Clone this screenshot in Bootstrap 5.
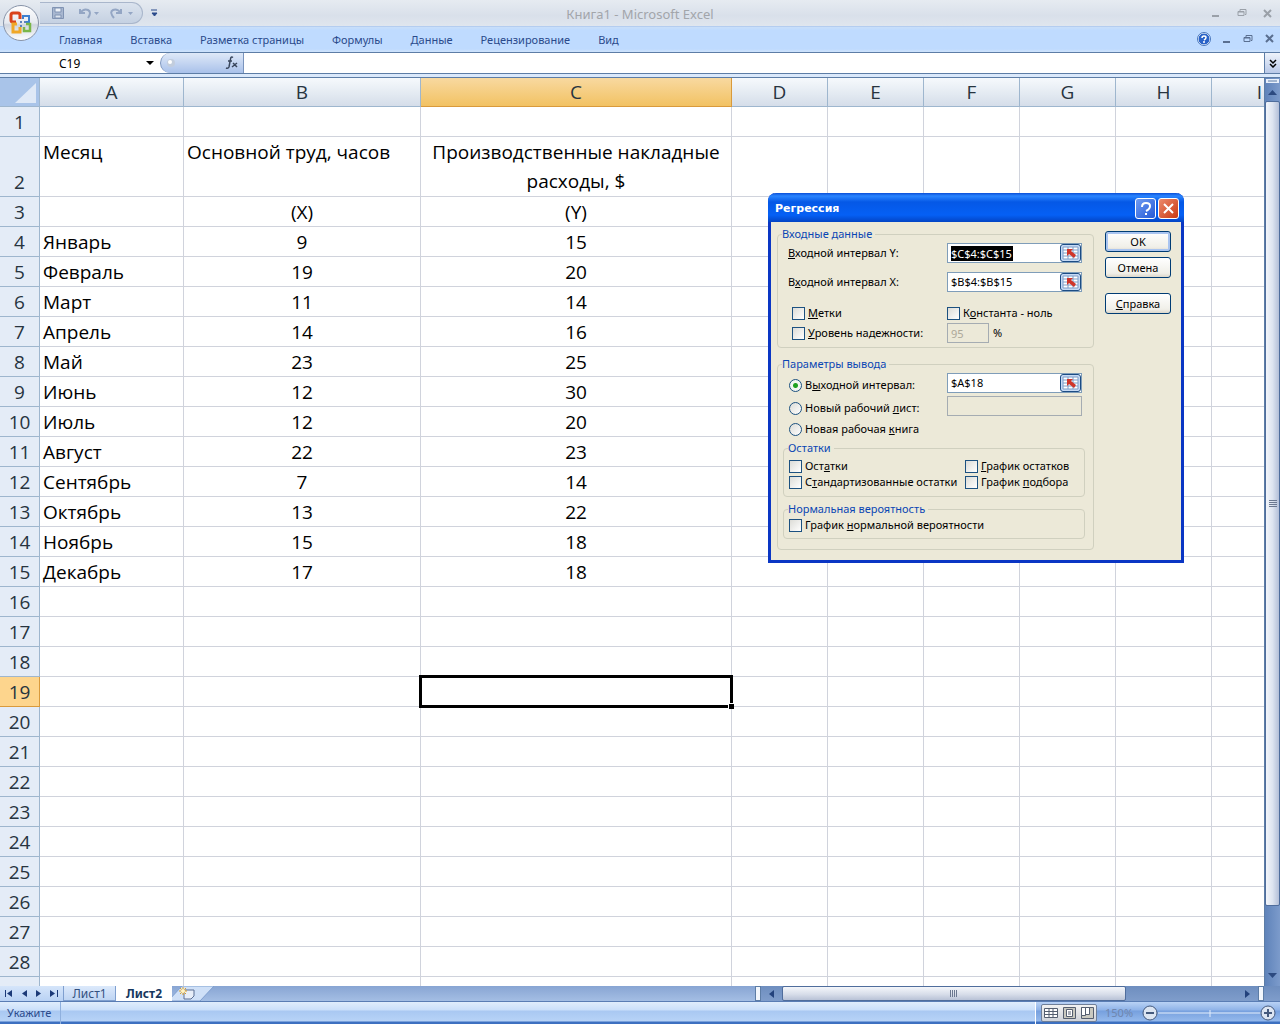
<!DOCTYPE html>
<html lang="ru">
<head>
<meta charset="utf-8">
<meta name="viewport" content="width=device-width, initial-scale=1">
<title>Книга1 - Microsoft Excel</title>
<link rel="stylesheet" href="https://cdn.jsdelivr.net/npm/bootstrap@5.3.0/dist/css/bootstrap.min.css">
<style>
body{font-family:"Noto Sans","Open Sans",sans-serif;font-size:11px;line-height:16px;color:#000;height:100vh;background:#fff}
button{border:0;background:none;padding:0;color:inherit;line-height:inherit}
svg{display:block;flex:none}
u{text-underline-offset:1px}
/* title bar and ribbon */
.titlebar{height:26px;background:linear-gradient(#e6ebf1,#d9e0ea 60%,#e0e6ee)}
.caption{font-size:13px;color:#a2a5aa;padding-top:2px}
.orb{left:3px;top:4px;z-index:3}
.quickbar{height:22px;margin-left:40px;width:103px;padding:0 8px 0 10px;border:1px solid #a9b6cb;border-left:0;border-radius:0 11px 11px 0;background:linear-gradient(#dbe3ee,#c5d1e2)}
.winbtns{color:#9aa0a8}
.ribbon{height:26px;background:linear-gradient(#c9dff9 0,#bfdbff 3px,#bfdbff 22px,#cfe3fb);border-top:1px solid #b4cdf0}
.ribbon a{color:#2a4a8b;text-decoration:none;font-size:11px}
.ribbon nav{padding-left:59px;gap:28px}
.docbtns{gap:12px;padding-right:6px;padding-bottom:2px;color:#5a6f90}
/* formula bar */
.fbar{height:22px;border-top:1px solid #5d7da6;border-bottom:1px solid #5d7da6;background:#fff}
.namebox{width:160px;font-size:12px;padding:1px 6px 0 59px}
.fxpill{width:84px;background:linear-gradient(#dfe9f8,#a9c1ea);border:1px solid #7a94bd;border-width:0 1px 0 1px;border-radius:10px 0 0 10px}
.fbar input{border:0;outline:0;min-width:0}
.expand{width:16px;background:linear-gradient(#eef3fb,#b9c9e8);border-left:1px solid #5d7da6}
.seam{height:4px;background:#dbe9fb;border-bottom:1px solid #5d7da6}
/* grid */
.sheet{table-layout:fixed;width:1308px;border-collapse:separate;border-spacing:0;font-family:"Open Sans","Noto Sans",sans-serif;font-size:19px;line-height:30px}
.sheet th{font-weight:400;text-align:center;color:#27343f;padding:0}
.sheet thead th{height:29px;line-height:27px;padding-top:1px;background:linear-gradient(#f6f9fc,#e2e9f1 60%,#d5dde9);border-right:1px solid #9eb6ce;border-bottom:1px solid #9eb6ce}
.sheet tbody th{background:#e4ecf7;border-right:1px solid #9eb6ce;border-bottom:1px solid #9eb6ce}
.sheet thead th.hot{background:linear-gradient(#f8d9a0,#f2c263);border-color:#d99a3c}
.sheet tbody th.hot{background:#fdd58d;border-color:#d99a3c}
.sheet thead th.corner{background:#a9c4e9;padding:0}
.sheet td{height:30px;padding:1px 3px 0;border-right:1px solid #d0d3dc;border-bottom:1px solid #d0d3dc;line-height:28px;vertical-align:top;position:relative}
.sheet tr.tall td{height:60px;line-height:29px}
.sheet tbody th{vertical-align:bottom;line-height:28px}
.cursor{left:-2px;top:-2px;right:-2px;bottom:-2px;border:3px solid #000;z-index:1}
.cursor::after{content:"";position:absolute;right:-4px;bottom:-4px;width:6px;height:6px;background:#000;border:solid #fff;border-width:1px 0 0 1px}
/* scroll bars */
.vscroll{width:16px;background:linear-gradient(90deg,#5f83ba,#7c9bcb);border-left:1px solid #5d7da6;color:#2c4a80}
.vthumb{margin-bottom:64px;border:1px solid #4f6d9c;border-radius:2px;background:linear-gradient(90deg,#f2f5fa,#dde4f0 50%,#b3bfd8)}
.hscroll{background:linear-gradient(#6e8ebf,#7f9dcb);color:#23427c}
.hthumb{width:344px;margin-right:114px;border:1px solid #4f6d9c;border-radius:2px;background:linear-gradient(#f4f6fa,#d8deea 55%,#b8c2d6)}
.knob{width:6px;background:#f2f6fc;border:1px solid #5d7da6}
/* sheet tabs */
.tabstrip{height:16px;background:linear-gradient(#88a5d3,#a4bee4);border-bottom:1px solid #5a7db4}
.navset{width:63px;background:linear-gradient(#d5e5fa,#b9d2f4);color:#1c3a78}
.leaf{font-size:12px;line-height:15px;color:#33507f}
.leaf.idle{width:53px;background:linear-gradient(#dce9fb,#bfd5f3);border:1px solid #7f9fcf;border-top:0}
.leaf.on{width:56px;background:#fff;color:#17375e;font-weight:700}
/* status bar */
.status{height:22px;background:linear-gradient(#e0edfc 0,#cadffa 8px,#a9c8f2 9px,#b7d3f7 19px,#3d70c0 20px);color:#2a4a8b}
.status .word{width:61px;padding-left:7px;padding-bottom:1px;border-right:1px solid #8fb0de}
.tools{width:245px;background:linear-gradient(#b9d2f5 0,#8fb3e8 8px,#76a0de 9px,#94b9ec 19px,#3d70c0 20px);border-left:1px solid #fff;padding-left:5px;padding-bottom:1px}
.views{width:56px;height:18px;border:1px solid #6f7f98;border-radius:2px;background:linear-gradient(#f2f2f2,#cfd3da)}
.zoomval{color:#6f86ae;margin:0 8px}
/* dialog */
.dlg{left:768px;top:193px;width:416px;border:3px solid #0a36c4;border-top:0;border-radius:8px 8px 0 0;background:#ece9d8;z-index:5;color:#000}
.dlg-head{height:29px;margin:0 -3px;padding:2px 5px 0 7px;gap:2px;border-radius:8px 8px 0 0;background:linear-gradient(#0a4fd8 0,#2a85ff 3px,#0558e6 9px,#0560f5 22px,#0344c4);color:#fff;font-family:"DejaVu Sans",sans-serif;font-size:11px;font-weight:700}
.capbtn{width:21px;height:21px;border:1px solid #fff;border-radius:3px;background:linear-gradient(135deg,#6f9bf2,#2459d6)}
.capbtn.shut{background:linear-gradient(135deg,#ec8a6c,#c93a14)}
.dlg-body{padding:6px 9px 10px 6px;gap:11px}
.frame{border:1px solid #d0d0bf;border-radius:4px;min-width:0}
.frame>legend{float:none;width:auto;margin:0;padding:0 3px 0 0;font-size:11px;line-height:12px;color:#0a46b4}
.outer{width:317px;padding:0 4px 4px}
.outer.two{margin-top:10px;padding-bottom:10px}
.inner{padding:4px 4px 6px;margin:3px 4px 0 1px}
.inner.last{margin-top:6px;padding:2px 4px 5px}
.ln{height:20px;margin-left:6px}
.two>.ln,.first{margin-top:3px}
.later{margin-top:9px}
.apart{margin-top:11px}
.ln16{height:16px}
.c1{width:159px}
.c2{width:176px}
.edit{width:135px;height:20px;border:1px solid #7f9db9;background:#fff}
.edit input{border:0;outline:0;padding:0;margin-left:3px;font-size:11px;line-height:14px;width:109px;background:transparent;color:#000}
.edit input.picked{width:62px;height:15px;margin-right:47px;background:#000;color:#fff}
.off{border:1px solid #a5acb2;background:#ece9d8;color:#aca899;font-size:11px;height:20px;padding:0 3px}
.off.short{width:42px}.off.long{width:135px}
.pick{width:21px;height:18px;border:1px solid #1c4c84;border-radius:3px;background:#c6daf5;display:flex;align-items:center;justify-content:center}
.tick{appearance:none;width:13px;height:13px;margin:0 3px 0 1px;border:1px solid #1c5180;background:linear-gradient(135deg,#dcdcd7,#fff);flex:none}
.tick[type=radio]{border-radius:50%}
.tick[type=radio]:checked{background:radial-gradient(circle,#21a121 0 2px,#f4f6f2 3px)}
.acts{padding-top:3px;gap:5px}
.push{width:66px;height:21px;border:1px solid #003c74;border-radius:3px;background:linear-gradient(#fff,#f0efe8 80%,#dcd7cb)}
.push.main{box-shadow:inset 0 0 0 2px #a9c4f0}
.push.help{margin-top:10px}
</style>
</head>
<body class="d-flex flex-column overflow-hidden position-relative">
<svg class="orb position-absolute" width="38" height="38" viewBox="0 0 38 38"><defs><linearGradient id="og" x2="0" y2="1"><stop stop-color="#fff"/><stop offset=".5" stop-color="#e6e9ef"/><stop offset=".55" stop-color="#cfd5df"/><stop offset="1" stop-color="#fff"/></linearGradient></defs><circle cx="18" cy="19" r="17.500" fill="url(#og)" stroke="#8793a8"/><g fill="none" stroke-width="3"><path d="M13 18H10q-2 0-2-2v-5q0-2 2-2h5q2 0 2 2v4" stroke="#d9431c"/><path d="M20 15v-3h6v6h-3" stroke="#3b7fd0" stroke-width="2"/><path d="M14 20H10v8h7v-5" stroke="#f0a828"/><path d="M23 20h4v7h-6v-4" stroke="#7ab648" stroke-width="2.500"/></g><path d="M17 17h2v2h-2zM21 17h2v2h-2zM17 21h2v2h-2z" fill="#5b82bd"/></svg>
<header class="titlebar d-flex align-items-center position-relative flex-shrink-0">
 <div class="quickbar d-flex align-items-center justify-content-between">
  <button aria-label="Сохранить"><svg width="16" height="16" fill="none" stroke="#8093b3"><path d="M2.500 2.500h11v11h-11z" fill="#a8b7d0"/><path d="M5 3h6v4H5z" fill="#edf1f7"/><path d="M5 10h6v3H5z" fill="#dde4ee"/></svg></button>
  <button aria-label="Отменить"><svg width="22" height="14" fill="none" stroke="#94a6c4" stroke-width="2"><path d="M3 3v4h5M3 7q4-5 8-3t0 8"/><path d="M17 6h5l-2.500 3z" fill="#94a6c4" stroke="none"/></svg></button>
  <button aria-label="Вернуть"><svg width="24" height="14" fill="none" stroke="#94a6c4" stroke-width="2"><path d="M11 3v4H6M11 7Q7 2 3 4t1 8"/><path d="M18 6h5l-2.500 3z" fill="#94a6c4" stroke="none"/></svg></button>
 </div>
 <button class="ms-2" aria-label="Настройка панели"><svg width="7" height="8"><path d="M0 1h6M1 4h5L3.500 7z" fill="#2a4a8b" stroke="#2a4a8b"/></svg></button>
 <div class="caption position-absolute top-50 start-50 translate-middle text-nowrap">Книга1 - Microsoft Excel</div>
 <div class="winbtns d-flex align-items-center ms-auto gap-3 pe-2"><svg width="10" height="10"><path d="M1 8h7" stroke="currentColor" stroke-width="2"/></svg><svg width="10" height="10" fill="none" stroke="currentColor"><path d="M3 3V1.500h6v5H8M1 3.500h6v4H1zM1 4h6"/></svg><svg width="9" height="9"><path d="M1 1l7 7M8 1L1 8" stroke="currentColor" stroke-width="2"/></svg></div>
</header>
<div class="ribbon d-flex align-items-center flex-shrink-0">
 <nav class="d-flex"><a href="#">Главная</a><a href="#">Вставка</a><a href="#">Разметка страницы</a><a href="#">Формулы</a><a href="#">Данные</a><a href="#">Рецензирование</a><a href="#">Вид</a></nav>
 <div class="docbtns d-flex align-items-center ms-auto"><svg width="14" height="14"><circle cx="7" cy="7" r="6" fill="#2a63c8" stroke="#fff"/><circle cx="7" cy="7" r="6.500" fill="none" stroke="#4575bd"/><path d="M5 6q0-2 2-2t2 1.500T7 8m0 1v2" fill="none" stroke="#fff" stroke-width="1.500"/></svg><svg width="8" height="10"><path d="M0 8h7" stroke="currentColor" stroke-width="2"/></svg><svg width="10" height="10" fill="none" stroke="currentColor"><path d="M3 3V1.500h6v5H8M1 3.500h6v4H1zM1 4h6"/></svg><svg width="9" height="9"><path d="M1 1l7 7M8 1L1 8" stroke="currentColor" stroke-width="2"/></svg></div>
</div>
<div class="fbar d-flex flex-shrink-0">
 <button class="namebox d-flex align-items-center justify-content-between" aria-label="Имя ячейки">C19<svg width="8" height="5"><path d="M0 0h8L4 4z"/></svg></button>
 <button class="fxpill d-flex align-items-center justify-content-between px-1" aria-label="Вставить функцию"><svg width="12" height="14"><circle cx="6" cy="7" r="4" fill="#c2cddd"/><circle cx="5" cy="6" r="2" fill="#fff"/></svg><svg width="14" height="16" fill="none" stroke="#39465c" stroke-width="1.500"><path d="M8 2.500Q6 1 5.500 4L4 12q-1 2-3 1M3 6h4M8 8l4 4M12 8l-5 4"/></svg></button>
 <input class="flex-grow-1" type="text" aria-label="Строка формул">
 <button class="expand d-flex align-items-center justify-content-center" aria-label="Развернуть"><svg width="8" height="9" fill="none" stroke="#000" stroke-width="1.500"><path d="M1 1l3 3 3-3M1 5l3 3 3-3"/></svg></button>
</div>
<div class="seam flex-shrink-0"></div>
<main class="d-flex flex-grow-1 overflow-hidden">
 <div class="flex-grow-1 overflow-hidden">
  <table class="sheet"><colgroup><col style="width:40px"><col style="width:144px"><col style="width:237px"><col style="width:311px"><col span="6" style="width:96px"></colgroup>
  <thead><tr id="heads"><th class="corner"><svg width="38" height="28"><path d="M36 5v20H15z" fill="#dfe9f7"/></svg></th></tr></thead><tbody id="rows"></tbody></table>
 </div>
 <div class="vscroll d-flex flex-column align-items-center flex-shrink-0">
  <svg width="13" height="23"><path d="M0 1h13v4H0z" fill="#e8f0fb"/><path d="M2 3h9" stroke="#5d7da6"/><path d="M2 17h9L6.500 12z" fill="currentColor"/></svg>
  <div class="vthumb flex-grow-1 w-100 d-flex align-items-center justify-content-center"><svg width="8" height="8"><path d="M0 .5h8M0 2.500h8M0 4.500h8M0 6.500h8" stroke="#6b7890"/></svg></div>
  <svg class="mb-1" width="9" height="12"><path d="M0 3h9L4.500 8z" fill="currentColor"/></svg>
 </div>
</main>
<footer class="flex-shrink-0">
 <div class="tabstrip d-flex">
  <div class="navset d-flex align-items-center justify-content-around"><svg width="8" height="8" fill="currentColor"><path d="M0 0h1v7H0zM7 0v7L2 3.500z"/></svg><svg width="5" height="8" fill="currentColor"><path d="M5 0v7L0 3.500z"/></svg><svg width="5" height="8" fill="currentColor"><path d="M0 0v7l5-3.500z"/></svg><svg width="8" height="8" fill="currentColor"><path d="M7 0h1v7H7zM0 0v7l5-3.500z"/></svg></div>
  <button class="leaf idle">Лист1</button><button class="leaf on">Лист2</button>
  <svg width="42" height="15"><path d="M-4 15L10 0h32L28 15z" fill="#cfe0f7" stroke="#7f9fcf"/><path d="M10 4h12v6l-3 3h-7V4" fill="#e8eef8" stroke="#5b6f94"/><path d="M11 1v8M7 5h8M8 2l6 6M14 2L8 8" stroke="#e0a020"/><circle cx="11" cy="5" r="2" fill="#fff3c4"/></svg>
  <div class="hscroll d-flex align-items-stretch ms-auto"><span class="knob"></span><svg class="align-self-center mx-2" width="5" height="8" fill="currentColor"><path d="M5 0v8L0 4z"/></svg><div class="hthumb d-flex align-items-center justify-content-center"><svg width="8" height="7"><path d="M.5 0v7M2.500 0v7M4.500 0v7M6.500 0v7" stroke="#6b7890"/></svg></div><svg class="align-self-center ms-1 me-2" width="6" height="8" fill="currentColor"><path d="M1 0v8l5-4z"/></svg><span class="knob me-3"></span></div>
 </div>
 <div class="status d-flex"><div class="word d-flex align-items-center">Укажите</div>
  <div class="tools d-flex align-items-center ms-auto">
   <div class="views d-flex align-items-center justify-content-around"><svg width="14" height="12" fill="#fff" stroke="#555f70"><path d="M.5 1.500h13v9H.5zM.5 4.500h13M.5 7.500h13M5 1.500v9M9 1.500v9"/></svg><svg width="13" height="12" fill="#c9c9c0" stroke="#555f70"><path d="M.5.5h12v11H.5z"/><path d="M3.500 2.500h6v7h-6zM5 5h3M5 7h3" fill="#fff"/></svg><svg width="13" height="12" fill="#c9c9c0" stroke="#555f70"><path d="M.5.5h12v11H.5z"/><path d="M.5.5h4v8h-4zM4.500.5h4v7h-4z" fill="#fff"/></svg></div>
   <span class="zoomval">150%</span>
   <svg width="136" height="18" stroke="#44597d"><path d="M17 9h103M69 6v7" stroke="#e4eefc"/><circle cx="9" cy="9" r="7" fill="#dce5f2"/><circle cx="127" cy="9" r="7" fill="#dce5f2"/><path d="M5 9h8M123 9h8M127 5v8" stroke-width="2"/></svg>
  </div></div>
</footer>

<section class="dlg position-absolute" role="dialog" aria-label="Регрессия">
 <div class="dlg-head d-flex align-items-center"><span class="me-auto">Регрессия</span>
  <button class="capbtn d-flex align-items-center justify-content-center" aria-label="Справка"><svg width="12" height="14" fill="none" stroke="#fff" stroke-width="2"><path d="M2 5q0-4 4-4t4 3-4 5M6 11v2"/></svg></button>
  <button class="capbtn shut d-flex align-items-center justify-content-center" aria-label="Закрыть"><svg width="13" height="13" stroke="#fff" stroke-width="2"><path d="M2 2l9 9M11 2l-9 9"/></svg></button></div>
 <form class="dlg-body d-flex" onsubmit="return false">
  <div class="d-flex flex-column">
   <fieldset class="frame outer"><legend>Входные данные</legend>
    <div class="d-flex align-items-center ln first"><label class="c1" for="iy"><u>В</u>ходной интервал Y:</label><div class="edit d-flex align-items-center"><input id="iy" class="picked" value="$C$4:$C$15"><button class="pick" type="button" aria-label="Выбрать диапазон"></button></div></div>
    <div class="d-flex align-items-center ln later"><label class="c1" for="ix">В<u>х</u>одной интервал X:</label><div class="edit d-flex align-items-center"><input id="ix" value="$B$4:$B$15"><button class="pick" type="button" aria-label="Выбрать диапазон"></button></div></div>
    <div class="d-flex align-items-center ln apart"><label class="c1 d-flex align-items-center ps-1"><input class="tick ms-0" type="checkbox"><span><u>М</u>етки</span></label><label class="d-flex align-items-center"><input class="tick ms-0" type="checkbox"><span>К<u>о</u>нстанта - ноль</span></label></div>
    <div class="d-flex align-items-center ln"><label class="c1 d-flex align-items-center ps-1"><input class="tick ms-0" type="checkbox"><span><u>У</u>ровень надежности:</span></label><input class="off short" value="95" disabled aria-label="Процент"><span class="ms-1">%</span></div>
   </fieldset>
   <fieldset class="frame outer two"><legend>Параметры вывода</legend>
    <div class="d-flex align-items-center ln"><label class="c1 d-flex align-items-center pt-1"><input class="tick" type="radio" name="out" checked><span>В<u>ы</u>ходной интервал:</span></label><div class="edit d-flex align-items-center"><input value="$A$18" aria-label="Выходной интервал"><button class="pick" type="button" aria-label="Выбрать диапазон"></button></div></div>
    <div class="d-flex align-items-center ln"><label class="c1 d-flex align-items-center pt-1"><input class="tick" type="radio" name="out"><span>Новый рабочий <u>л</u>ист:</span></label><input class="off long" disabled aria-label="Имя листа"></div>
    <div class="d-flex align-items-center ln"><label class="d-flex align-items-center"><input class="tick" type="radio" name="out"><span>Новая рабочая <u>к</u>нига</span></label></div>
    <fieldset class="frame inner"><legend>Остатки</legend>
     <div class="d-flex"><div class="c2"><label class="d-flex align-items-center ln16"><input class="tick" type="checkbox"><span>Ост<u>а</u>тки</span></label><label class="d-flex align-items-center ln16"><input class="tick" type="checkbox"><span class="text-nowrap">С<u>т</u>андартизованные остатки</span></label></div>
     <div><label class="d-flex align-items-center ln16"><input class="tick" type="checkbox"><span><u>Г</u>рафик остатков</span></label><label class="d-flex align-items-center ln16"><input class="tick" type="checkbox"><span>График <u>п</u>одбора</span></label></div></div>
    </fieldset>
    <fieldset class="frame inner last"><legend>Нормальная вероятность</legend><label class="d-flex align-items-center ln16"><input class="tick" type="checkbox"><span>График <u>н</u>ормальной вероятности</span></label></fieldset>
   </fieldset>
  </div>
  <div class="acts d-flex flex-column"><button class="push main">OK</button><button class="push">Отмена</button><button class="push help"><u>С</u>правка</button></div>
 </form>
</section>
<script>
const data={2:['Месяц','Основной труд, часов','Производственные накладные расходы, $'],3:['','(X)','(Y)'],4:['Январь',9,15],5:['Февраль',19,20],6:['Март',11,14],7:['Апрель',14,16],8:['Май',23,25],9:['Июнь',12,30],10:['Июль',12,20],11:['Август',22,23],12:['Сентябрь',7,14],13:['Октябрь',13,22],14:['Ноябрь',15,18],15:['Декабрь',17,18]};
document.getElementById('heads').insertAdjacentHTML('beforeend',[...'ABCDEFGHI'].map(c=>`<th class="${c==='C'?'hot':''}">${c}</th>`).join(''));
let html='';
for(let r=1;r<=29;r++){const d=data[r]||[];
 html+=`<tr class="${r===2?'tall':''}"><th class="${r===19?'hot':''}">${r<29?r:''}</th>`;
 for(let c=0;c<9;c++)html+=`<td class="${c&&!(r===2&&c===1)?'text-center':''}">${d[c]??''}${r===19&&c===2?'<div class="cursor position-absolute"></div>':''}</td>`;
 html+='</tr>'}
document.getElementById('rows').innerHTML=html;
document.querySelectorAll('.pick').forEach(b=>b.innerHTML='<svg width="17" height="14"><path d="M1 1h15v12H1z" fill="#fff" stroke="#7d9cc8"/><path d="M1 4h15M1 7h15M1 10h15M6 1v12M11 1v12" stroke="#7d9cc8"/><path d="M5 3h6L9 5l5 4-2 3-5-4-2 2z" fill="#d0352a"/></svg>');
</script>
<script src="https://cdn.jsdelivr.net/npm/bootstrap@5.3.0/dist/js/bootstrap.bundle.min.js"></script>
</body>
</html>
